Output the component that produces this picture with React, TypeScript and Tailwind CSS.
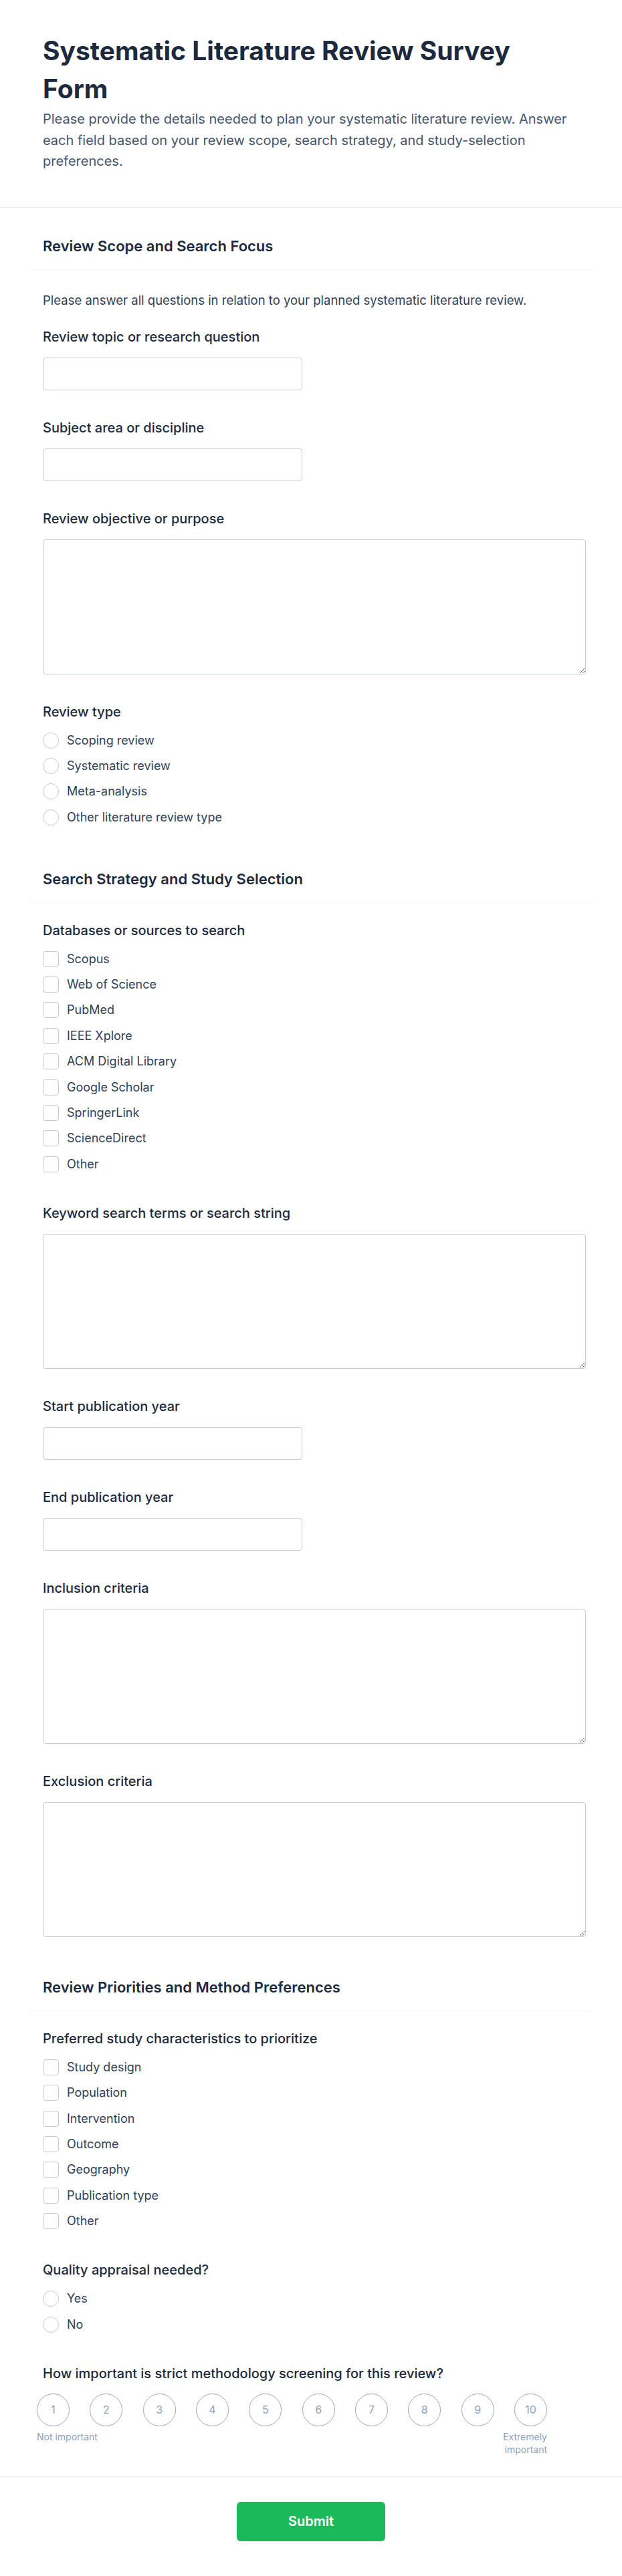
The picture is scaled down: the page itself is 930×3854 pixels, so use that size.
import type { ReactNode } from 'react';

const databases = [
  'Scopus',
  'Web of Science',
  'PubMed',
  'IEEE Xplore',
  'ACM Digital Library',
  'Google Scholar',
  'SpringerLink',
  'ScienceDirect',
  'Other',
];

const characteristics = [
  'Study design',
  'Population',
  'Intervention',
  'Outcome',
  'Geography',
  'Publication type',
  'Other',
];

function Label({ children }: { children: ReactNode }) {
  return (
    <label className="block text-[20px] leading-[28px] font-medium text-slate-800 mb-[17px]">
      {children}
    </label>
  );
}

function TextField({ label }: { label: string }) {
  return (
    <div>
      <Label>{label}</Label>
      <input
        type="text"
        className="block w-[388px] h-[49px] rounded-[4px] border border-[#c4cad4] bg-white px-3 outline-none"
      />
    </div>
  );
}

function TextArea({ label }: { label: string }) {
  return (
    <div>
      <Label>{label}</Label>
      <textarea className="block w-full h-[202px] rounded-[4px] border border-[#c4cad4] bg-white p-3 outline-none resize-y" />
    </div>
  );
}

function Options({ label, items, type }: { label: string; items: string[]; type: 'radio' | 'checkbox' }) {
  return (
    <div className="pb-[5px]">
      <Label>{label}</Label>
      <div className="mt-[1px] flex flex-col gap-[14.4px]">
        {items.map((item) => (
          <label key={item} className="flex items-center gap-3 h-6">
            <input
              type={type}
              name={label}
              className={
                type === 'radio'
                  ? 'appearance-none shrink-0 w-6 h-6 rounded-full border border-[#c4cad4] bg-white'
                  : 'appearance-none shrink-0 w-6 h-6 rounded-[4px] border border-[#c4cad4] bg-white'
              }
            />
            <span className="text-[18px] leading-[24px] text-slate-700">{item}</span>
          </label>
        ))}
      </div>
    </div>
  );
}

function Section({ title, first, children }: { title: string; first?: boolean; children: ReactNode }) {
  return (
    <section className={first ? 'mt-[42px]' : 'mt-[60px]'}>
      <h2 className="pl-[19px] pb-[20px] border-b border-slate-100 text-[22px] leading-[30px] font-semibold text-slate-800">
        {title}
      </h2>
      <div className="pl-[19px] pr-[9px] pt-[27px] flex flex-col gap-[42px]">{children}</div>
    </section>
  );
}

export default function App() {
  return (
    <div className="min-h-screen bg-white font-['Inter',sans-serif]">
      <header className="px-[64px] pt-[47px] pb-[52px] border-b border-slate-200">
        <h1 className="max-w-[740px] text-[39px] leading-[57px] font-bold text-slate-800">
          Systematic Literature Review Survey Form
        </h1>
        <p className="mt-[2px] max-w-[800px] text-[20px] leading-[31.5px] text-slate-600">
          Please provide the details needed to plan your systematic literature review. Answer each field based on
          your review scope, search strategy, and study-selection preferences.
        </p>
      </header>

      <main className="px-[45px] pb-[31px]">
        <Section title="Review Scope and Search Focus" first>
          <p className="mt-[4px] -mb-[15px] text-[18.5px] leading-[28px] text-slate-700">
            Please answer all questions in relation to your planned systematic literature review.
          </p>
          <TextField label="Review topic or research question" />
          <TextField label="Subject area or discipline" />
          <TextArea label="Review objective or purpose" />
          <Options
            label="Review type"
            type="radio"
            items={['Scoping review', 'Systematic review', 'Meta-analysis', 'Other literature review type']}
          />
        </Section>

        <Section title="Search Strategy and Study Selection">
          <Options label="Databases or sources to search" type="checkbox" items={databases} />
          <TextArea label="Keyword search terms or search string" />
          <TextField label="Start publication year" />
          <TextField label="End publication year" />
          <TextArea label="Inclusion criteria" />
          <TextArea label="Exclusion criteria" />
        </Section>

        <Section title="Review Priorities and Method Preferences">
          <Options label="Preferred study characteristics to prioritize" type="checkbox" items={characteristics} />
          <Options label="Quality appraisal needed?" type="radio" items={['Yes', 'No']} />
          <div>
            <label className="block text-[20px] leading-[28px] font-medium text-slate-800 mb-[16px]">
              How important is strict methodology screening for this review?
            </label>
            <div className="-ml-[9px] w-[763px]">
              <div className="flex justify-between">
                {Array.from({ length: 10 }, (_, i) => (
                  <button
                    key={i}
                    type="button"
                    className="w-[49px] h-[49px] rounded-full border border-[#9aa6ba] bg-white text-[16px] text-slate-400"
                  >
                    {i + 1}
                  </button>
                ))}
              </div>
              <div className="mt-[6px] flex justify-between items-start text-[14px] leading-[19px] text-slate-400">
                <span>Not important</span>
                <span className="w-[70px] text-right">Extremely important</span>
              </div>
            </div>
          </div>
        </Section>
      </main>

      <footer className="border-t border-slate-200 pt-[37px] pb-[50px] flex justify-center">
        <button
          type="button"
          className="w-[222px] h-[59px] rounded-md bg-[#1aba5a] text-white text-[20px] font-semibold"
        >
          Submit
        </button>
      </footer>
    </div>
  );
}
